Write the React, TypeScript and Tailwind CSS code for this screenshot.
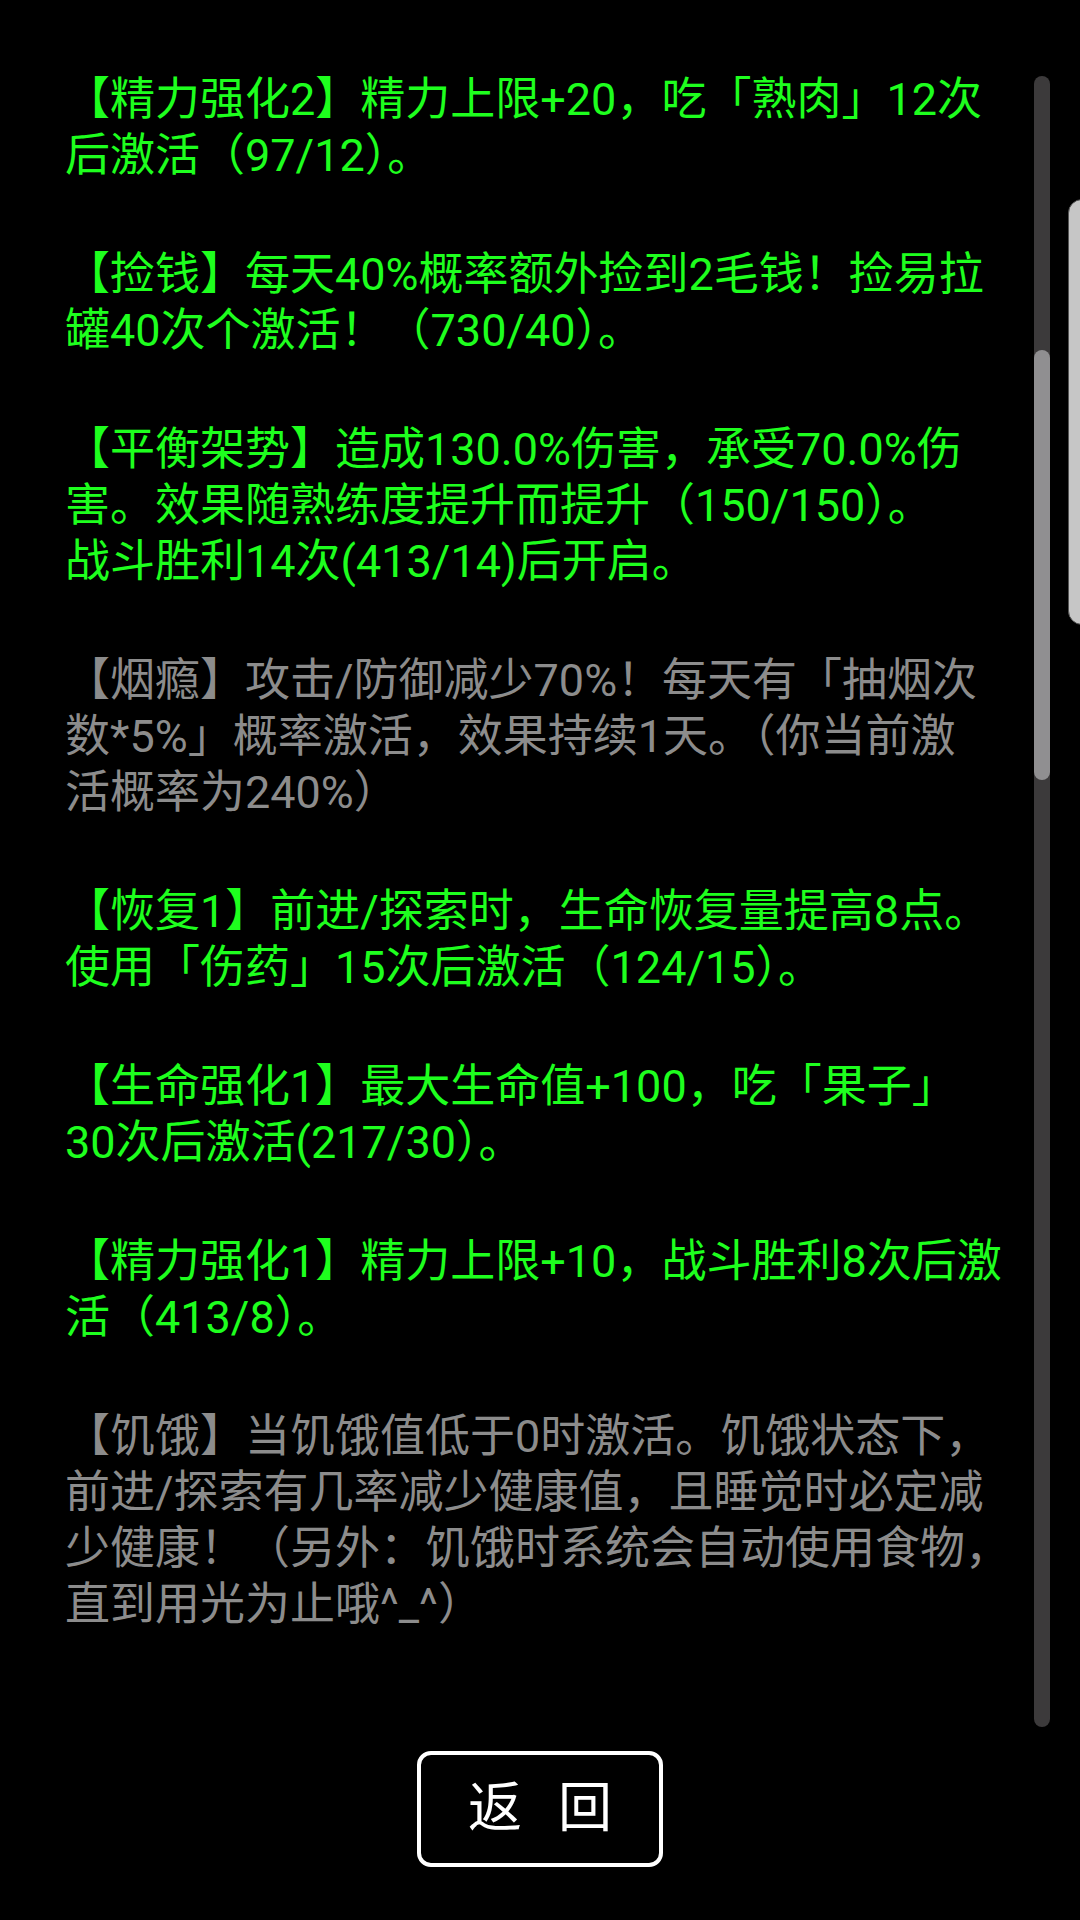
import React from "react";

const GREEN = "text-[#1eff1e]";
const GRAY = "text-[#8c8c8c]";

const items: { lines: string[]; active: boolean }[] = [
  { lines: ["【精力强化2】精力上限+20，吃「熟肉」12次", "后激活（97/12）。"], active: true },
  { lines: ["【捡钱】每天40%概率额外捡到2毛钱！捡易拉", "罐40次个激活！（730/40）。"], active: true },
  {
    lines: [
      "【平衡架势】造成130.0%伤害，承受70.0%伤",
      "害。效果随熟练度提升而提升（150/150）。",
      "战斗胜利14次(413/14)后开启。",
    ],
    active: true,
  },
  {
    lines: [
      "【烟瘾】攻击/防御减少70%！每天有「抽烟次",
      "数*5%」概率激活，效果持续1天。（你当前激",
      "活概率为240%）",
    ],
    active: false,
  },
  { lines: ["【恢复1】前进/探索时，生命恢复量提高8点。", "使用「伤药」15次后激活（124/15）。"], active: true },
  { lines: ["【生命强化1】最大生命值+100，吃「果子」", "30次后激活(217/30）。"], active: true },
  { lines: ["【精力强化1】精力上限+10，战斗胜利8次后激", "活（413/8）。"], active: true },
  {
    lines: [
      "【饥饿】当饥饿值低于0时激活。饥饿状态下，",
      "前进/探索有几率减少健康值，且睡觉时必定减",
      "少健康！（另外：饥饿时系统会自动使用食物，",
      "直到用光为止哦^_^）",
    ],
    active: false,
  },
];

export default function App() {
  return (
    <div
      className="relative flex h-[1920px] w-[1080px] flex-col overflow-hidden bg-black"
      style={{ fontFamily: "Roboto, 'Noto Sans CJK SC', sans-serif" }}
    >
      {/* 技能列表 */}
      <div className="flex flex-1 flex-col gap-[63px] pl-[65px] pt-[72px]">
        {items.map((it, i) => (
          <p
            key={i}
            className={`whitespace-nowrap text-[45px] leading-[56px] ${it.active ? GREEN : GRAY}`}
          >
            {it.lines.map((l, j) => (
              <React.Fragment key={j}>
                {l}
                {j < it.lines.length - 1 && <br />}
              </React.Fragment>
            ))}
          </p>
        ))}
      </div>

      {/* 返回按钮 */}
      <div className="flex justify-center pb-[53px]">
        <button className="flex h-[116px] w-[246px] items-center justify-center gap-[36px] rounded-[14px] border-[4px] border-white text-[54px] leading-none text-white">
          <span>返</span>
          <span>回</span>
        </button>
      </div>

      {/* scrollbar */}
      <div className="absolute left-[1034px] top-[76px] h-[1651px] w-[16px] rounded-full bg-[#3c3a3b]">
        <div className="absolute left-0 top-[274px] h-[430px] w-[16px] rounded-full bg-[#908f91]" />
      </div>

      {/* edge panel handle */}
      <div className="absolute left-[1068px] top-[199px] h-[426px] w-[20px] rounded-l-[14px] border border-[#555] bg-[#c6c6c6]" />
    </div>
  );
}
